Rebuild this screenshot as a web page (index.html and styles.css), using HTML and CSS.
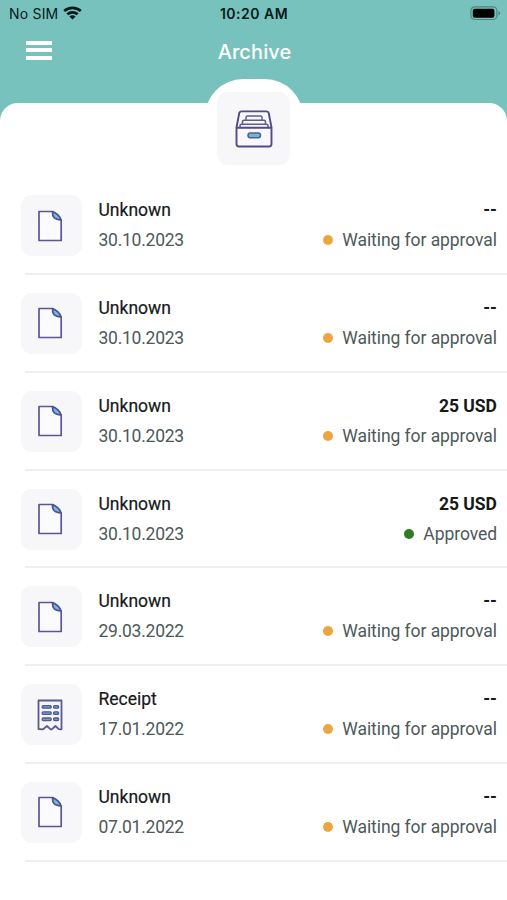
FILE: index.html
```html
<!DOCTYPE html>
<html lang="en">
<head>
<meta charset="utf-8">
<title>Archive</title>
<link rel="stylesheet" href="styles.css">
</head>
<body>
<svg class="defs" width="0" height="0">
  <symbol id="doc" viewBox="0 0 26 32">
    <path d="M2 1.5H16L24.2 10V30.5H2Z" fill="#fafaff" stroke="#5c5595" stroke-width="1.7" stroke-linejoin="round"/>
    <path d="M15.5 1.8C15.2 7 17.500 9.8 24 9.8C23.500 7 19 2 15.5 1.8Z" fill="#79b5dc" stroke="#4d548f" stroke-width="1.7" stroke-linejoin="round"/>
  </symbol>
  <symbol id="receipt" viewBox="0 0 26 32">
    <path d="M1.5 1.5H24.5V30.4L21.8 30.2L18.4 27L14.8 30.4H13.6L9.9 27L6 30.4L1.5 30Z" fill="#f5f5fc" stroke="#5c5890" stroke-width="1.8" stroke-linejoin="round"/>
    <g fill="#6e9fc6" stroke="#565a90" stroke-width="1.3">
      <rect x="5.2" y="6.6" width="9" height="2.6" rx="1"/><rect x="16.6" y="6.6" width="5" height="2.6" rx="1"/>
      <rect x="5.2" y="12.8" width="9" height="2.6" rx="1"/><rect x="16.6" y="12.8" width="5" height="2.6" rx="1"/>
      <rect x="5.2" y="19" width="9" height="2.6" rx="1"/><rect x="16.6" y="19" width="5" height="2.6" rx="1"/>
    </g>
  </symbol>
</svg>

<header class="header">
  <div class="status">
    <div class="carrier">No SIM
      <svg width="19" height="14" viewBox="0 0 19 14" fill="none" stroke="#07191a" stroke-width="2.7">
        <path d="M1.2 5.1C5.8.7 13.2.7 17.8 5.1"/>
        <path d="M4.3 8.3C7.2 5.6 11.8 5.6 14.7 8.3"/>
        <path d="M9.5 13.5L6.4 10.4C8.2 8.9 10.8 8.9 12.6 10.4Z" fill="#07191a" stroke="none"/>
      </svg>
    </div>
    <div class="time">10:20 AM</div>
    <svg class="battery" width="31" height="15" viewBox="0 0 31 15">
      <rect x=".9" y=".9" width="26" height="12.6" rx="3.8" fill="none" stroke="#4d8581" stroke-width="1.2"/>
      <rect x="2.8" y="2.7" width="21.6" height="9" rx="2" fill="#000"/>
      <path d="M28.5 5C30.5 5.8 30.5 8.7 28.5 9.5Z" fill="#4d8581"/>
    </svg>
  </div>
  <div class="bar">
    <div class="menu"><i></i><i></i><i></i></div>
    <h1>Archive</h1>
  </div>
</header>

<main class="sheet">
  <div class="bump">
    <div class="tile big">
      <svg width="38" height="38" viewBox="0 0 38 38" fill="none" stroke="#514a8b" stroke-width="1.9" stroke-linejoin="round">
        <path d="M1.5 17.5L4.2 3.3Q4.6 1.4 6.6 1.4H31.4Q33.4 1.4 33.8 3.3L36.5 17.5"/>
        <g stroke="#5c5d89" stroke-width="1.5">
          <path d="M5 17.5V15.5Q5 14.3 6.5 14.3H31.5Q33 14.3 33 15.5V17.5"/>
          <path d="M7.5 14V11.5Q7.5 10.3 9 10.3H29Q30.5 10.3 30.5 11.5V14"/>
          <path d="M11 10V7.5Q11 6 12.5 6H25.5Q27 6 27 7.5V10"/>
        </g>
        <path d="M1.5 17.7H36.5V34Q36.5 36.5 34 36.5H4Q1.5 36.5 1.5 34Z" fill="#f8f8fd"/>
        <rect x="13" y="23" width="12.5" height="4.8" rx="2.2" fill="#70b9cc" stroke="#52648b" stroke-width="1.5"/>
      </svg>
    </div>
  </div>
  <ul class="list">
    <li><div class="tile"><svg><use href="#doc"/></svg></div><div class="info"><div class="line"><span class="name">Unknown</span><b>--</b></div><div class="line sub"><span class="date">30.10.2023</span><span class="state">Waiting for approval</span></div></div></li>
    <li><div class="tile"><svg><use href="#doc"/></svg></div><div class="info"><div class="line"><span class="name">Unknown</span><b>--</b></div><div class="line sub"><span class="date">30.10.2023</span><span class="state">Waiting for approval</span></div></div></li>
    <li><div class="tile"><svg><use href="#doc"/></svg></div><div class="info"><div class="line"><span class="name">Unknown</span><b>25 USD</b></div><div class="line sub"><span class="date">30.10.2023</span><span class="state">Waiting for approval</span></div></div></li>
    <li><div class="tile"><svg><use href="#doc"/></svg></div><div class="info"><div class="line"><span class="name">Unknown</span><b>25 USD</b></div><div class="line sub"><span class="date">30.10.2023</span><span class="state approved">Approved</span></div></div></li>
    <li><div class="tile"><svg><use href="#doc"/></svg></div><div class="info"><div class="line"><span class="name">Unknown</span><b>--</b></div><div class="line sub"><span class="date">29.03.2022</span><span class="state">Waiting for approval</span></div></div></li>
    <li><div class="tile"><svg><use href="#receipt"/></svg></div><div class="info"><div class="line"><span class="name">Receipt</span><b>--</b></div><div class="line sub"><span class="date">17.01.2022</span><span class="state">Waiting for approval</span></div></div></li>
    <li><div class="tile"><svg><use href="#doc"/></svg></div><div class="info"><div class="line"><span class="name">Unknown</span><b>--</b></div><div class="line sub"><span class="date">07.01.2022</span><span class="state">Waiting for approval</span></div></div></li>
  </ul>
</main>
</body>
</html>
```
FILE: styles.css
```css
* { box-sizing: border-box; }
body {
  margin: 0;
  height: 900px;
  overflow: hidden;
  background: #77c2bc;
  font-family: Roboto, "Liberation Sans", sans-serif;
  color: #17191a;
}
.defs { position: absolute; }
.header { height: 103px; }
.status {
  display: grid;
  grid-template-columns: 1fr auto 1fr;
  align-items: center;
  height: 27px;
  padding: 0 6px 0 9px;
  font-family: Inter, sans-serif;
  font-size: 14px;
  color: #07191a;
}
.carrier { display: flex; align-items: center; gap: 5px; letter-spacing: 0.2px; }
.carrier svg { margin-top: -2px; }
.time { margin-right: 2px; font-weight: 600; letter-spacing: 0.5px; }
.battery { justify-self: end; }
.bar {
  display: grid;
  grid-template-columns: 1fr auto 1fr;
  align-items: center;
  height: 50px;
  padding: 0 26px;
}
.menu { display: grid; gap: 3.5px; width: 26px; margin-top: -4px; }
.menu i { height: 4px; background: #fff; }
.bar h1 {
  margin: 0 -1px 0 1px;
  font-family: Inter, sans-serif;
  font-size: 20px;
  font-weight: 500;
  letter-spacing: 0.1px;
  color: #fff;
}
.sheet {
  height: 797px;
  background: #fff;
  border-radius: 18px 18px 0 0;
}
.bump {
  position: relative;
  top: -24px;
  display: flex;
  justify-content: center;
  width: 98px;
  height: 97px;
  margin: 0 auto -24px;
  padding-top: 13px;
  background: #fff;
  border-radius: 38px 38px 0 0;
}
.tile {
  display: grid;
  place-items: center;
  width: 61px;
  height: 61px;
  flex: none;
  background: #f7f7fa;
  border-radius: 11px;
}
.tile svg { width: 26px; height: 32px; margin-left: -2px; }
.tile.big { width: 73px; height: 73px; }
.tile.big svg { width: 38px; height: 38px; margin: 0; }
.list { margin: 0; padding: 0.2px 0 0; list-style: none; }
.list li {
  position: relative;
  display: flex;
  gap: 17px;
  height: 97.8px;
  padding: 19px 10px 0 20.5px;
}
.list li::after {
  content: "";
  position: absolute;
  left: 25px;
  right: 0;
  bottom: -1px;
  height: 2px;
  background: #efefef;
}
.info { flex: 1; }
.line {
  display: flex;
  justify-content: space-between;
  height: 30px;
  line-height: 30px;
  font-size: 17.5px;
}
.name { -webkit-text-stroke: 0.2px; }
.line b { font-weight: 700; }
.sub { color: #4c5959; }
.date { letter-spacing: -0.25px; }
.state { display: flex; align-items: center; gap: 9.5px; letter-spacing: -0.07px; }
.state::before {
  content: "";
  width: 10px;
  height: 10px;
  border-radius: 50%;
  background: #eba640;
}
.approved::before { background: #2e7d20; }
```
